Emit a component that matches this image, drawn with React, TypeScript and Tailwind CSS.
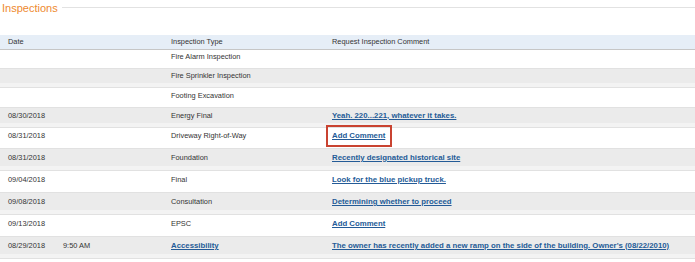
import React from 'react';

type Row = {
  date?: string;
  time?: string;
  type: string;
  typeLink?: boolean;
  comment?: string;
  boxed?: boolean;
  h: number;
};

const rows: Row[] = [
  { type: 'Fire Alarm Inspection', h: 14 },
  { type: 'Fire Sprinkler Inspection', h: 14 },
  { type: 'Footing Excavation', h: 15 },
  { date: '08/30/2018', type: 'Energy Final', comment: 'Yeah. 220...221, whatever it takes.', h: 15 },
  { date: '08/31/2018', type: 'Driveway Right-of-Way', comment: 'Add Comment', boxed: true, h: 16 },
  { date: '08/31/2018', type: 'Foundation', comment: 'Recently designated historical site', h: 17 },
  { date: '09/04/2018', type: 'Final', comment: 'Look for the blue pickup truck.', h: 17 },
  { date: '09/08/2018', type: 'Consultation', comment: 'Determining whether to proceed', h: 17 },
  { date: '09/13/2018', type: 'EPSC', comment: 'Add Comment', h: 17 },
  {
    date: '08/29/2018',
    time: '9:50 AM',
    type: 'Accessibility',
    typeLink: true,
    comment: "The owner has recently added a new ramp on the side of the building. Owner's (08/22/2010)",
    h: 17,
  },
];

const heights: Record<number, string> = {
  14: 'h-[14px]',
  15: 'h-[15px]',
  16: 'h-[16px]',
  17: 'h-[17px]',
};

const cols = 'grid grid-cols-[63px_108px_161px_1fr] items-center';
const link = 'text-[7.8px] font-bold text-[#245b97] underline underline-offset-[1px] decoration-[#245b97]';

export default function App() {
  return (
    <div className="h-[262px] w-[695px] overflow-hidden bg-white font-['Liberation_Sans',Arial,sans-serif] text-[7.4px] text-[#333]">
      <div className="flex h-[15px] items-center pl-[2px] pt-[1px]">
        <span className="text-[11px] leading-none text-[#ee8a2f]">Inspections</span>
        <div className="ml-[4px] -mt-[2px] h-px flex-1 bg-[#e2e2e2]" />
      </div>

      <div className="h-[20px]" />

      <div className={`${cols} h-[15px] border-b border-[#c6c6c6] bg-[#e6eef7]`}>
        <span className="pl-[8px]">Date</span>
        <span />
        <span>Inspection Type</span>
        <span>Request Inspection Comment</span>
      </div>

      {rows.map((r, i) => {
        const gray = i % 2 === 1;
        return (
          <div key={i} className="border-b border-[#e1e1e1]">
            <div className={`${cols} ${heights[r.h]} ${gray ? 'bg-[#ebebeb]' : 'bg-white'}`}>
              <span className="pl-[8px]">{r.date}</span>
              <span>{r.time}</span>
              <span>{r.typeLink ? <a className={link}>{r.type}</a> : r.type}</span>
              <span className="whitespace-nowrap">
                {r.comment &&
                  (r.boxed ? (
                    <span className="relative inline-block">
                      <a className={link}>{r.comment}</a>
                      <span className="absolute -bottom-[5px] -left-[6px] -right-[7px] -top-[5px] border-2 border-[#c94331]" />
                    </span>
                  ) : (
                    <a className={link}>{r.comment}</a>
                  ))}
              </span>
            </div>
            <div className={`h-[4px] ${gray ? 'bg-[#f3f3f3]' : 'bg-white'}`} />
          </div>
        );
      })}
    </div>
  );
}
